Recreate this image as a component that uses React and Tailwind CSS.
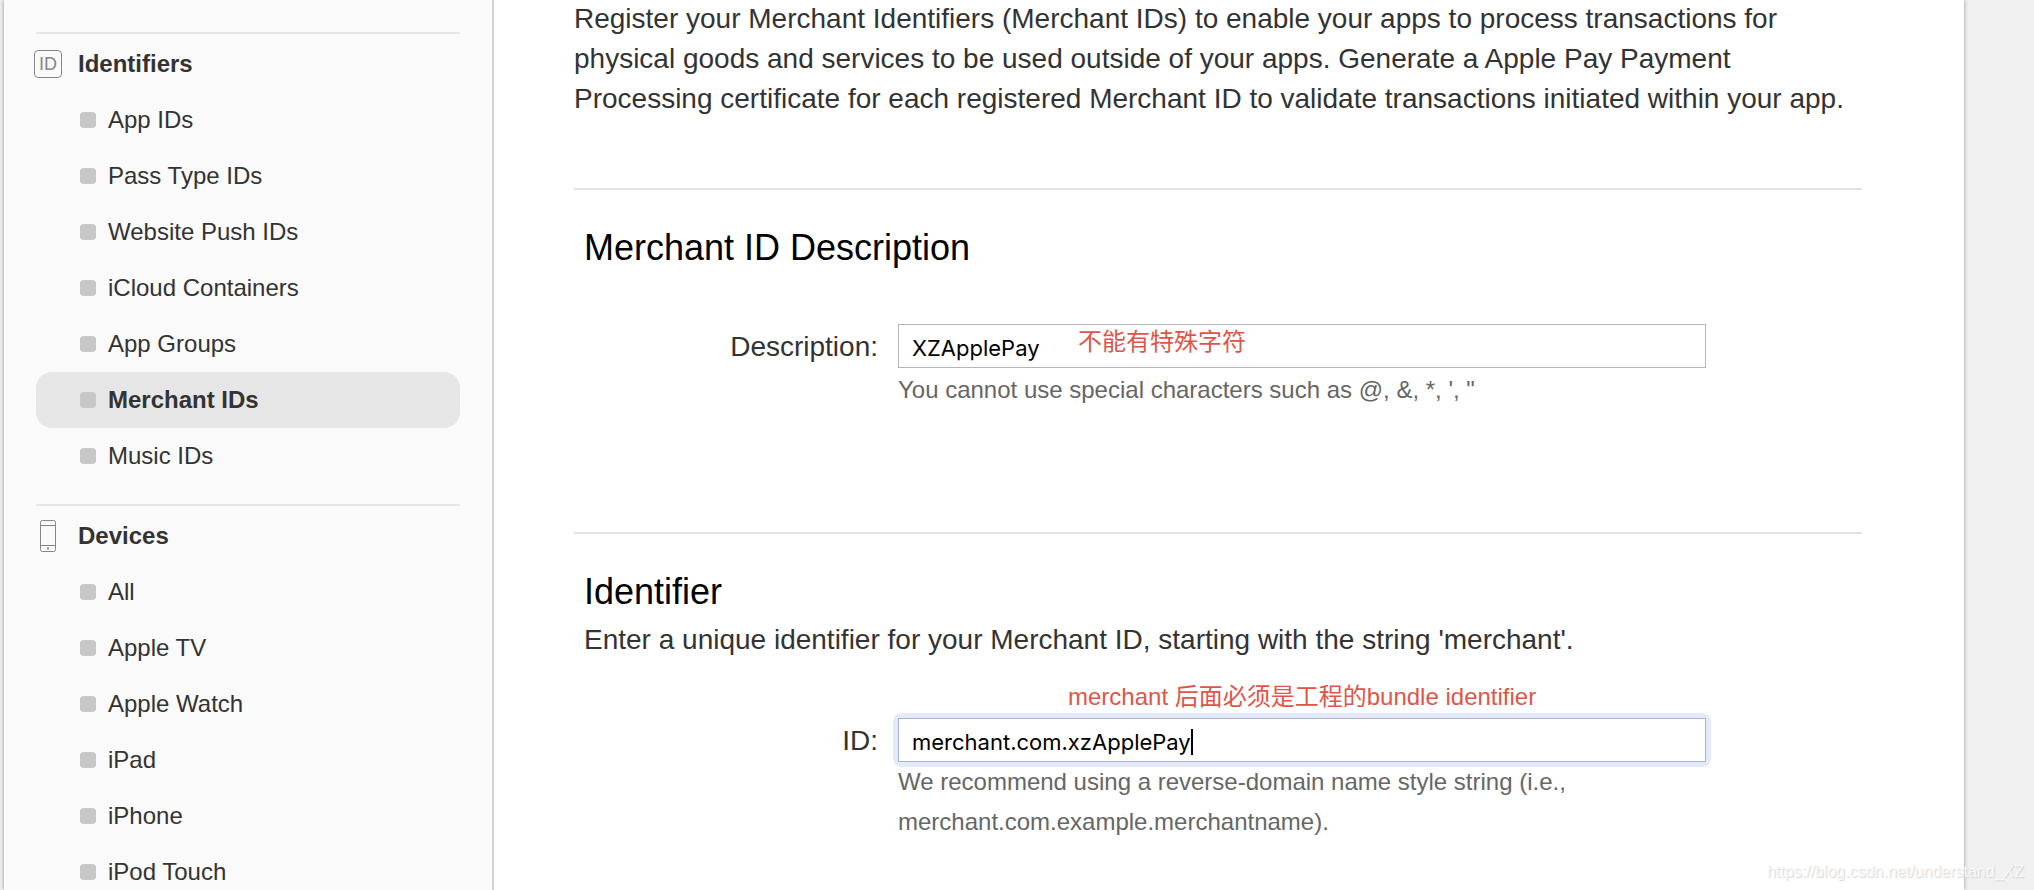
import React, { useState } from 'react';

const sections = [
  {
    title: 'Identifiers',
    icon: IdIcon,
    items: ['App IDs', 'Pass Type IDs', 'Website Push IDs', 'iCloud Containers', 'App Groups', 'Merchant IDs', 'Music IDs'],
  },
  {
    title: 'Devices',
    icon: DeviceIcon,
    items: ['All', 'Apple TV', 'Apple Watch', 'iPad', 'iPhone', 'iPod Touch'],
  },
];

function IdIcon() {
  return (
    <span className="w-7 h-7 flex items-center justify-center rounded border border-[#858585] text-lg leading-none text-[#858585]">
      ID
    </span>
  );
}

function DeviceIcon() {
  return (
    <svg width="28" height="32" viewBox="0 0 28 32" fill="none" stroke="#858585" aria-hidden="true">
      <rect x="6.5" y="0.5" width="15" height="31" rx="2" />
      <path d="M7 5.5h14M7 25.5h14" />
      <rect x="13" y="27.5" width="2" height="2" fill="#858585" stroke="none" />
    </svg>
  );
}

function SidebarSection({ title, icon: Icon, items, active }) {
  return (
    <section className="mb-5">
      <div className="mx-8 border-t-2 border-[#e6e6e6]" />
      <div className="mt-0.5 h-14 pl-[30px] flex items-center">
        <Icon />
        <h2 className="ml-4 text-2xl font-bold">{title}</h2>
      </div>
      <ul className="mx-8">
        {items.map((item) => (
          <li key={item}>
            <a
              href="#"
              className={`h-14 pl-11 flex items-center gap-3 rounded-2xl text-2xl ${
                item === active ? 'bg-[#e6e6e6] font-bold' : ''
              }`}
            >
              <span className="w-4 h-4 rounded bg-[#c7c7c7]" />
              {item}
            </a>
          </li>
        ))}
      </ul>
    </section>
  );
}

export default function App() {
  const [description, setDescription] = useState('XZApplePay');
  const [identifier, setIdentifier] = useState('merchant.com.xzApplePay');

  return (
    <div className="relative h-screen overflow-hidden flex bg-[#f0f0f0] text-[#333] font-['Liberation_Sans','Noto_Sans_CJK_SC',sans-serif]">
      <div className="ml-1 mr-[70px] flex-1 min-w-0 flex bg-white shadow-[0_0_4px_rgba(0,0,0,0.4)]">
        <nav className="w-[490px] shrink-0 pt-8 bg-[#fafafa] border-r-2 border-[#d4d4d4]">
          {sections.map((section) => (
            <SidebarSection key={section.title} {...section} active="Merchant IDs" />
          ))}
        </nav>

        <main className="flex-1 min-w-0 pl-20 pr-[102px]">
          <p className="-mt-px pb-[69px] text-[28px] leading-10">
            Register your Merchant Identifiers (Merchant IDs) to enable your apps to process transactions for
            <br />
            physical goods and services to be used outside of your apps. Generate a Apple Pay Payment
            <br />
            Processing certificate for each registered Merchant ID to validate transactions initiated within your app.
          </p>

          <section className="h-[344px] border-t-2 border-[#e3e3e3] pt-9">
            <h1 className="pl-2.5 text-4xl leading-[44px] text-black">Merchant ID Description</h1>
            <div className="mt-[54px] pr-[156px] flex gap-5">
              <label htmlFor="description" className="w-[304px] shrink-0 text-right text-[28px] leading-[46px]">
                Description:
              </label>
              <div className="relative flex-1">
                <input
                  id="description"
                  type="text"
                  value={description}
                  onChange={(e) => setDescription(e.target.value)}
                  className="block w-full h-11 px-[13px] pt-1 border border-[#b5b5b5] bg-white text-[22px] text-black outline-none font-[Inter,sans-serif]"
                />
                <span className="absolute left-[180px] top-0 text-2xl leading-9 text-[#e05548]">不能有特殊字符</span>
                <p className="mt-0.5 text-2xl leading-10 text-[#666]">
                  You cannot use special characters such as @, &amp;, *, ', "
                </p>
              </div>
            </div>
          </section>

          <section className="border-t-2 border-[#e3e3e3] pt-9">
            <h1 className="pl-2.5 text-4xl leading-[44px] text-black">Identifier</h1>
            <p className="pl-2.5 mt-1.5 text-[28px] leading-10">
              Enter a unique identifier for your Merchant ID, starting with the string 'merchant'.
            </p>
            <div className="mt-[58px] pr-[156px] flex gap-5">
              <label htmlFor="identifier" className="w-[304px] shrink-0 text-right text-[28px] leading-[46px]">
                ID:
              </label>
              <div className="relative flex-1">
                <span className="absolute left-[170px] -top-10 text-2xl leading-[38px] text-[#e05548]">
                  merchant 后面必须是工程的bundle identifier
                </span>
                <div className="rounded-sm ring-[5px] ring-[#e4eafc]">
                  <input
                    id="identifier"
                    type="text"
                    autoFocus
                    value={identifier}
                    onChange={(e) => setIdentifier(e.target.value)}
                    className="block w-full h-11 px-[13px] pt-1 border border-[#a9b4cc] bg-white text-[22px] text-black caret-transparent outline-none font-[Inter,sans-serif]"
                  />
                </div>
                <div className="absolute left-3.5 top-0 h-11 flex items-center pt-1 text-[22px] pointer-events-none font-[Inter,sans-serif]">
                  <span className="invisible" aria-hidden="true">{identifier}</span>
                  <span className="w-0.5 h-[26px] bg-black" />
                </div>
                <p className="text-2xl leading-10 text-[#666]">
                  We recommend using a reverse-domain name style string (i.e.,
                  <br />
                  merchant.com.example.merchantname).
                </p>
              </div>
            </div>
          </section>
        </main>
      </div>

      <span className="absolute right-2.5 bottom-1.5 text-base leading-6 text-[#f8f8f8] [text-shadow:1px_1px_1px_#d4d4d4]">
        https://blog.csdn.net/understand_XZ
      </span>
    </div>
  );
}
